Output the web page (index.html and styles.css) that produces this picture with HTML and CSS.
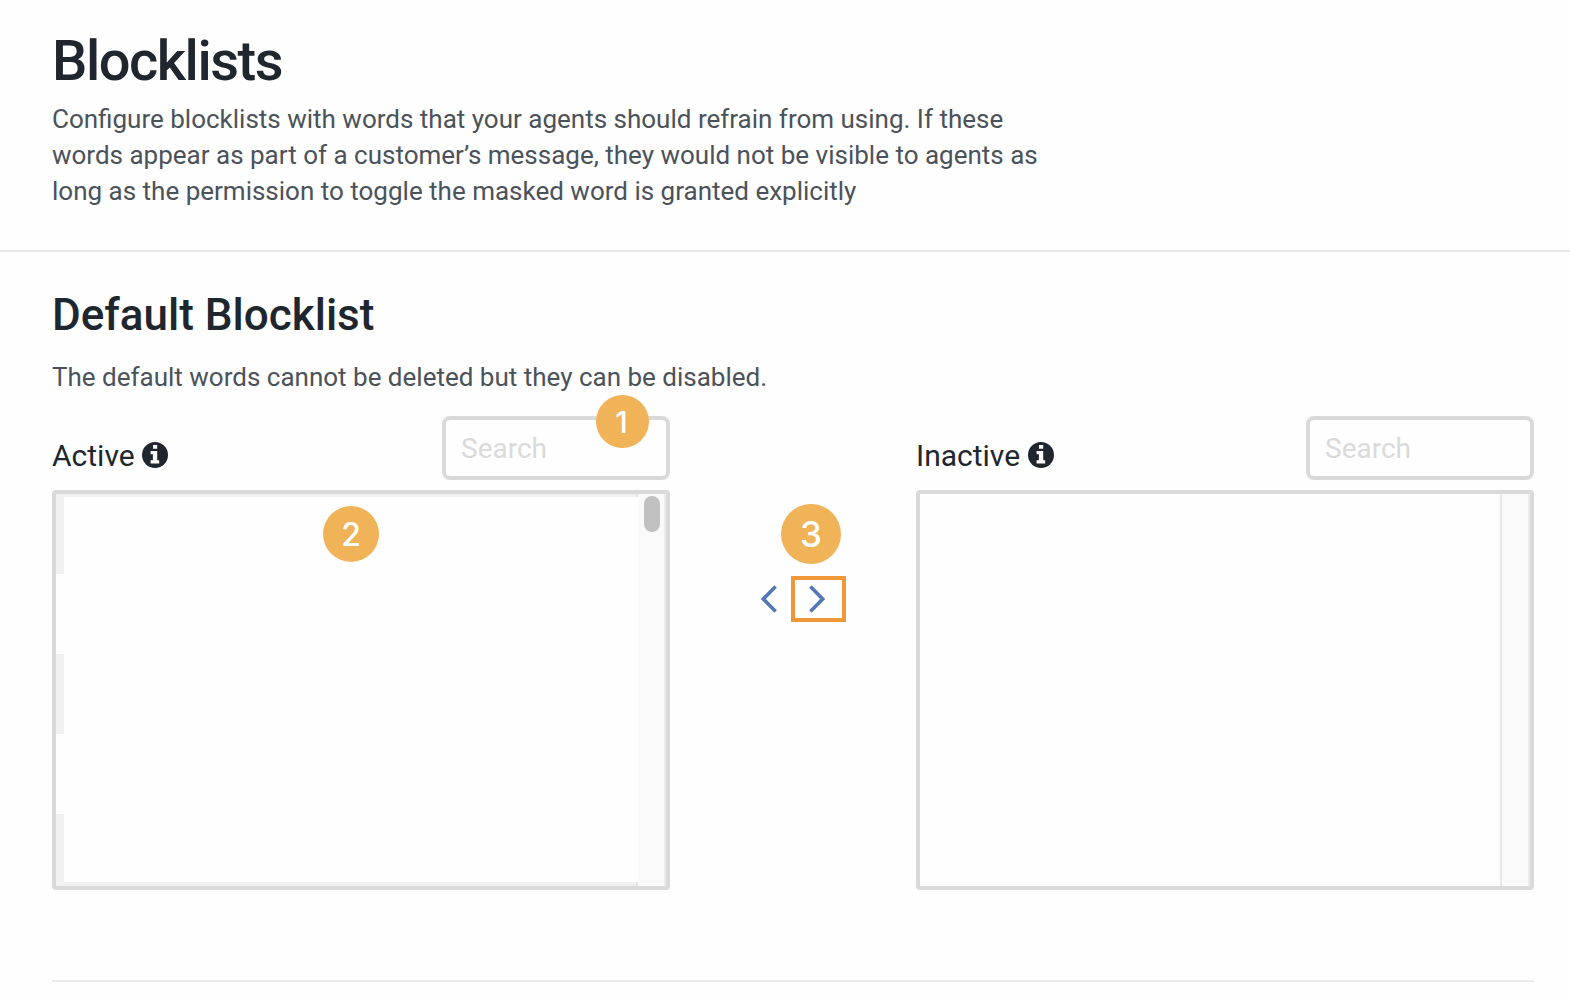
FILE: index.html
```
<!DOCTYPE html>
<html lang="en">

<head>
    <meta charset="UTF-8">
    <meta name="viewport" content="width=device-width, initial-scale=1.0">
    <title>Blocklists</title>
    <link rel="stylesheet" href="styles.css">
</head>

<body>
    <header class="page-header">
        <h1>Blocklists</h1>
        <p>Configure blocklists with words that your agents should refrain from using. If these words appear as part of a customer’s message, they would not be visible to agents as long as the permission to toggle the masked word is granted explicitly</p>
    </header>
    <main class="blocklist">
        <h2>Default Blocklist</h2>
        <p class="blocklist-note">The default words cannot be deleted but they can be disabled.</p>
        <div class="transfer">
            <section class="panel">
                <div class="panel-header">
                    <div class="panel-title">
                        <span>Active</span>
                        <svg class="info-icon" viewBox="0 0 26 26">
                            <circle cx="13" cy="13" r="13" />
                            <path d="M11 3h4.2v3.8H11zM8.6 9h6.6v9.2h2v3.2H8.6v-3.2h2.3v-6H8.6z" />
                        </svg>
                    </div>
                    <div class="search-container">
                        <input type="text" placeholder="Search">
                        <span class="badge badge-search">1</span>
                    </div>
                </div>
                <div class="word-list">
                    <div class="words striped">
                        <div class="words-cover"></div>
                    </div>
                    <div class="scroll-track">
                        <div class="scroll-thumb"></div>
                    </div>
                    <span class="badge badge-list">2</span>
                </div>
            </section>
            <div class="transfer-buttons">
                <a class="arrow">
                    <svg viewBox="0 0 16 28"><path d="M14.6 1.6L2.4 14l12.2 12.4" /></svg>
                </a>
                <a class="arrow highlighted">
                    <svg viewBox="0 0 16 28"><path d="M1.4 1.6L13.6 14L1.4 26.4" /></svg>
                </a>
                <span class="badge badge-move">3</span>
            </div>
            <section class="panel">
                <div class="panel-header">
                    <div class="panel-title">
                        <span>Inactive</span>
                        <svg class="info-icon" viewBox="0 0 26 26">
                            <circle cx="13" cy="13" r="13" />
                            <path d="M11 3h4.2v3.8H11zM8.6 9h6.6v9.2h2v3.2H8.6v-3.2h2.3v-6H8.6z" />
                        </svg>
                    </div>
                    <div class="search-container">
                        <input type="text" placeholder="Search">
                    </div>
                </div>
                <div class="word-list">
                    <div class="words"></div>
                    <div class="scroll-track empty"></div>
                </div>
            </section>
        </div>
    </main>
</body>

</html>
```
FILE: styles.css
```
* {
    box-sizing: border-box;
}

body {
    margin: 0;
    height: 998px;
    overflow: hidden;
    font-family: Roboto, sans-serif;
    background-color: #fefefe;
    color: #20262e;
}

h1,
h2,
p {
    margin: 0;
}

.page-header {
    height: 252px;
    padding: 28px 52px 0;
    border-bottom: 2px solid #e8e8e8;
}

.page-header h1 {
    font-size: 56px;
    font-weight: 500;
    line-height: 66px;
    letter-spacing: -1.45px;
    margin-bottom: 7px;
}

.page-header p,
.blocklist-note {
    font-size: 26px;
    line-height: 36px;
    color: #4b525a;
}

.page-header p {
    width: 1000px;
}

.blocklist {
    width: 1482px;
    height: 730px;
    margin-left: 52px;
    padding-top: 35px;
    border-bottom: 2px solid #ebebeb;
}

.blocklist h2 {
    font-size: 44px;
    font-weight: 500;
    line-height: 56px;
    margin-bottom: 16px;
}

.transfer {
    display: flex;
    justify-content: space-between;
    margin-top: 21px;
}

.panel {
    width: 618px;
}

.panel-header {
    display: flex;
    justify-content: space-between;
    height: 64px;
    margin-bottom: 10px;
}

.panel-title {
    display: flex;
    align-items: center;
    gap: 7.5px;
    height: 40px;
    margin-top: 19px;
    font-size: 30px;
}

.info-icon {
    width: 26px;
    height: 26px;
    fill: #20262e;
}

.info-icon path {
    fill: #fefefe;
}

.search-container {
    position: relative;
}

.search-container input {
    display: block;
    width: 228px;
    height: 64px;
    padding: 0 15px;
    border: 4px solid #dadada;
    border-radius: 8px;
    background-color: #fefefe;
    font-family: inherit;
    font-size: 28px;
}

.search-container input::placeholder {
    color: #dadada;
}

.word-list {
    position: relative;
    display: flex;
    height: 400px;
    border: 4px solid #dadada;
    border-radius: 4px;
}

.words {
    flex: 1;
}

.striped {
    padding: 3px 0 4px 7.5px;
    background: repeating-linear-gradient(#f1f1f1 0 80px, #fefefe 80px 160px);
    border-right: 2px solid #e4e4e4;
}

.words-cover {
    height: 100%;
    margin-right: -2px;
    background-color: #fefefe;
}

.scroll-track {
    width: 28px;
    padding: 2px 0 0 6px;
    background-color: #fafafa;
    border-right: 2px solid #ebebeb;
}

.scroll-track.empty {
    width: 30px;
    border-left: 2px solid #e8e8e8;
}

.scroll-thumb {
    width: 16px;
    height: 36px;
    border-radius: 8px;
    background-color: #c1c1c1;
}

.transfer-buttons {
    position: relative;
    display: flex;
    gap: 14px;
    width: 85px;
    height: 46px;
    margin: 160px 0 0 21px;
}

.arrow {
    display: flex;
    align-items: center;
}

.arrow svg {
    width: 16px;
    height: 28px;
    margin-top: -1px;
    fill: none;
    stroke: #5478b5;
    stroke-width: 3.6;
}

.highlighted {
    width: 55px;
    padding-left: 14px;
    border: 4px solid #f09837;
}

/* numbered callouts */
.badge {
    position: absolute;
    display: flex;
    justify-content: center;
    align-items: center;
    border-radius: 50%;
    background-color: #f0b357;
    color: #fff;
    font-family: Inter, sans-serif;
    font-weight: 500;
}

.badge-search {
    top: -21px;
    right: 21px;
    width: 53px;
    height: 53px;
    padding-right: 2px;
    font-size: 30px;
}

.badge-list {
    top: 12px;
    left: 267px;
    width: 56px;
    height: 56px;
    font-size: 32px;
}

.badge-move {
    top: -72px;
    left: 20px;
    width: 60px;
    height: 60px;
    font-size: 35px;
}
```
